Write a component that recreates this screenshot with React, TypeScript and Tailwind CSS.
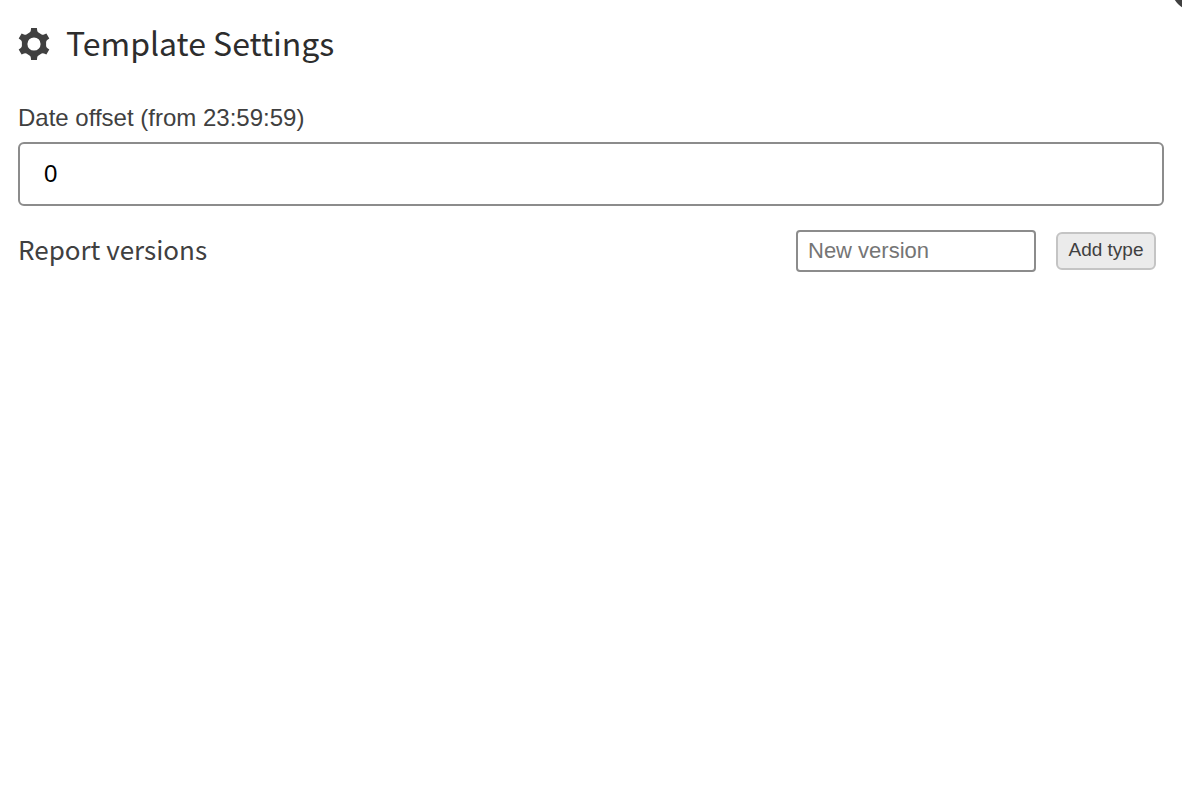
import React, { useState } from 'react'

function GearIcon({ className }: { className?: string }) {
  return (
    <svg viewBox="0 0 32 32" fill="currentColor" fillRule="evenodd" aria-hidden="true" className={className}>
      <path d="M13.1 0H18.9L19.2 2.6Q19.4 4 20.5 4.6L23.6 6.4Q24.6 7 26 6.5L28.4 5.5L31.3 10.5L29.2 12.1Q28.1 13 28.1 14.2V17.8Q28.1 19 29.2 19.9L31.3 21.5L28.4 26.5L26 25.5Q24.6 25 23.6 25.6L20.5 27.4Q19.4 28 19.2 29.4L18.9 32H13.1L12.8 29.4Q12.6 28 11.5 27.4L8.4 25.6Q7.4 25 6 25.5L3.6 26.5L.7 21.5L2.8 19.9Q3.9 19 3.9 17.8V14.2Q3.9 13 2.8 12.1L.7 10.5L3.6 5.5L6 6.5Q7.4 7 8.4 6.4L11.5 4.6Q12.6 4 12.8 2.6ZM16 9.4a6.6 6.6 0 1 0 0 13.2a6.6 6.6 0 0 0 0-13.2z" />
    </svg>
  )
}

export default function App() {
  const [offset, setOffset] = useState('0')
  const [version, setVersion] = useState('')

  const handleSubmit = (e: React.FormEvent) => {
    e.preventDefault()
    if (!version.trim()) return
    setVersion('')
  }

  return (
    <main className="relative min-h-screen overflow-hidden bg-white px-[18px] pt-5 font-['Liberation_Sans',sans-serif] text-[#404040]">
      {/* Close button, mostly outside the panel corner */}
      <button
        type="button"
        aria-label="Close"
        className="absolute -top-[37px] -right-[37px] size-12 rounded-full bg-[#404040]"
      />

      <h1 className="flex items-center gap-4 font-['Noto_Sans_CJK_SC',sans-serif] text-[32px] leading-11 text-[#2d2d2d]">
        <GearIcon className="size-8 text-[#404040]" />
        <span className="pb-1">Template Settings</span>
      </h1>

      <label htmlFor="date-offset" className="mt-8 block text-2xl leading-9">
        Date offset (from 23:59:59)
      </label>
      <input
        id="date-offset"
        type="text"
        value={offset}
        onChange={(e) => setOffset(e.target.value)}
        className="mt-1.5 block h-16 w-full rounded-md border-2 border-[#8c8c8c] bg-white px-6 text-2xl text-black"
      />

      <form onSubmit={handleSubmit} className="mt-6 flex items-center pr-2">
        <h2 className="flex-1 pb-1 font-['Noto_Sans_CJK_SC',sans-serif] text-[26px] leading-9">Report versions</h2>
        <input
          type="text"
          aria-label="New version"
          placeholder="New version"
          value={version}
          onChange={(e) => setVersion(e.target.value)}
          className="h-[42px] w-60 rounded-sm border-2 border-[#8c8c8c] bg-white px-2.5 text-[22px] text-black placeholder:text-[#757575]"
        />
        <button
          type="submit"
          className="ml-5 h-[38px] w-[100px] rounded-md border-2 border-[#c4c4c4] bg-[#ebebeb] pb-0.5 text-[19px] leading-7 whitespace-nowrap"
        >
          Add type
        </button>
      </form>
    </main>
  )
}
